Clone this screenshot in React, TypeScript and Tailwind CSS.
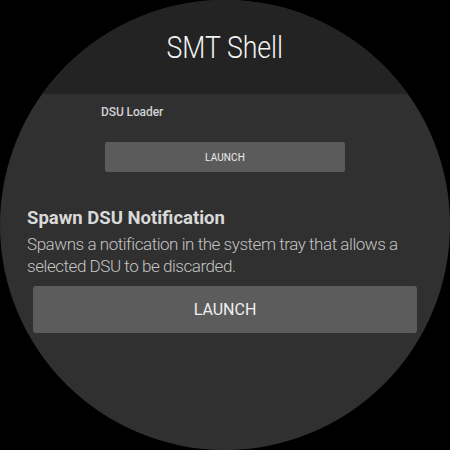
const App = () => {
  return (
    <div className="w-[450px] h-[450px] bg-black" style={{ fontFamily: "Roboto, 'Noto Sans', sans-serif" }}>
      <div className="w-[450px] h-[450px] rounded-full overflow-hidden bg-[#303030]">
        <div className="h-[94px] bg-[#232323] flex items-center justify-center">
          <h1 className="inline-block text-[31px] font-light text-[#f2f2f2] leading-none pt-[1px] scale-x-[0.86]">SMT Shell</h1>
        </div>
        <div className="pt-[10px] pl-[101px]">
          <p className="text-[12px] leading-[16px] font-medium text-[#d2d2d2] tracking-[-0.1px]">DSU Loader</p>
        </div>
        <div className="pt-[22px] pl-[105px]">
          <button className="w-[240px] h-[30px] bg-[#5b5b5b] rounded-[2px] text-[10px] text-[#ececec] tracking-[0.1px]">
            LAUNCH
          </button>
        </div>
        <div className="pt-[34px] px-[27px]">
          <h2 className="text-[18.5px] leading-[24px] font-bold text-[#d9d9d9]">Spawn DSU Notification</h2>
          <p className="mt-[3px] text-[17px] leading-[22px] font-light text-[#c4c4c4] tracking-[-0.45px]">
            Spawns a notification in the system tray that allows a selected DSU to be discarded.
          </p>
        </div>
        <div className="pt-[9px] pl-[33px]">
          <button className="w-[384px] h-[47px] bg-[#5c5c5c] rounded-[3px] text-[16px] text-[#f0f0f0]">
            LAUNCH
          </button>
        </div>
      </div>
    </div>
  );
};

export default App;
